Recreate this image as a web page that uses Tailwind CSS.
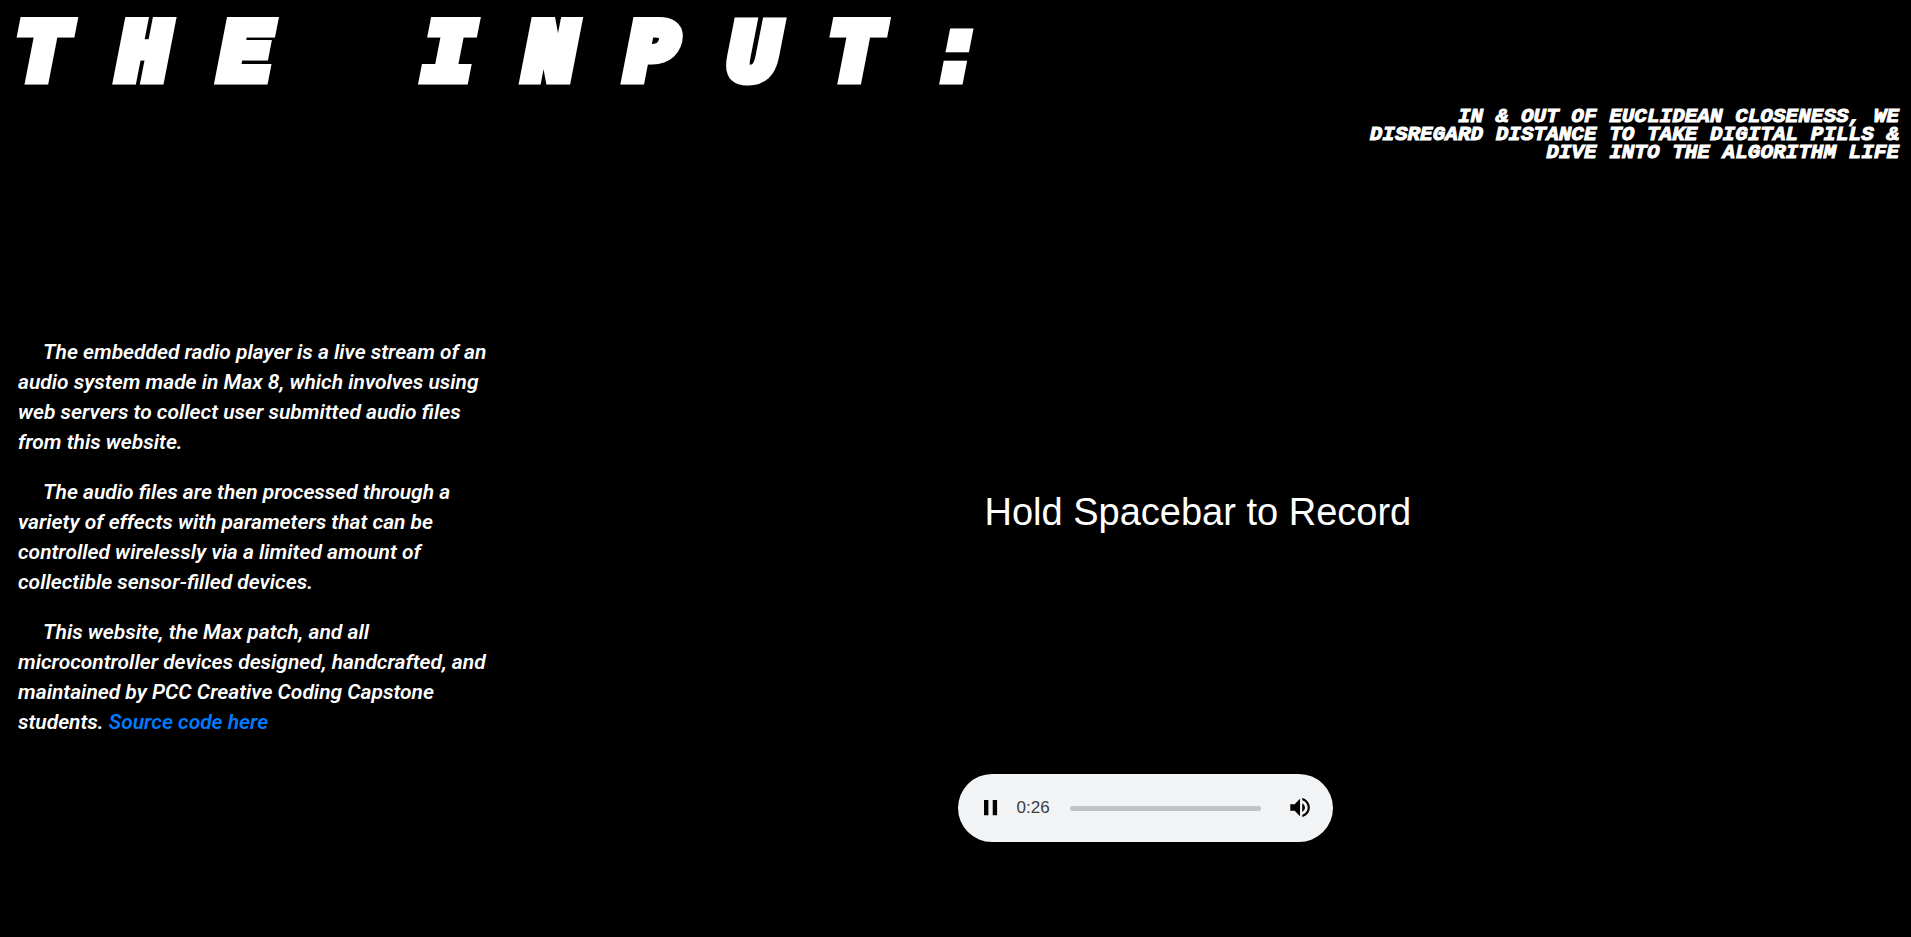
<!DOCTYPE html>
<html lang="en">
<head>
<meta charset="utf-8">
<meta name="viewport" content="width=device-width, initial-scale=1">
<title>The Input</title>
<script src="https://cdn.jsdelivr.net/npm/@tailwindcss/browser@4"></script>
</head>
<body class="min-h-screen bg-black text-white font-['Liberation_Sans',sans-serif]">
<header class="flex flex-col px-3">
  <h1 class="pl-1 pt-2 text-[86px] leading-[96px] font-bold italic whitespace-pre tracking-[50px] font-['Liberation_Mono',monospace] [-webkit-text-stroke:11px_white]">THE INPUT:</h1>
  <p class="self-end w-[540px] max-w-full pt-1 text-right text-[21px] leading-[18px] font-bold italic font-['Liberation_Mono',monospace] [-webkit-text-stroke:1px_white]">IN &amp; OUT OF EUCLIDEAN CLOSENESS, WE DISREGARD DISTANCE TO TAKE DIGITAL PILLS &amp; DIVE INTO THE ALGORITHM LIFE</p>
</header>
<main class="flex">
  <section class="w-1/2 pt-[175px] pl-[18px]">
    <div class="flex flex-col gap-5 w-[486px] max-w-full text-[21px] leading-[30px] font-semibold italic font-[Roboto,sans-serif]">
      <p class="indent-[25px]">The embedded radio player is a live stream of an audio system made in Max 8, which involves using web servers to collect user submitted audio files from this website.</p>
      <p class="indent-[25px]">The audio files are then processed through a variety of effects with parameters that can be controlled wirelessly via a limited amount of collectible sensor-filled devices.</p>
      <p class="indent-[25px]">This website, the Max patch, and all microcontroller devices designed, handcrafted, and maintained by PCC Creative Coding Capstone students. <a href="#" class="text-[#007bff]">Source code here</a></p>
    </div>
  </section>
  <section class="w-1/2 flex flex-col items-start pt-[326px] pl-[2px]">
    <p class="pl-[27px] text-[38px] leading-[48px]">Hold Spacebar to Record</p>
    <div class="mt-[238px] flex h-[68px] w-[375px] max-w-full items-center rounded-full bg-[#f1f3f4] pl-[18px] pr-[18px]">
      <button type="button" aria-label="Pause" class="size-[30px] shrink-0">
        <svg viewBox="0 0 24 24" class="size-[30px]" fill="#000"><path d="M6 19h4V5H6v14zm8-14v14h4V5h-4z" transform="translate(1.2 1.2) scale(.87)"/></svg>
      </button>
      <span class="ml-[11px] text-[17px] leading-6 text-[#3c4043]">0:26</span>
      <input type="range" min="0" max="100" value="0" aria-label="Seek" class="ml-5 h-[5px] min-w-0 flex-1 appearance-none rounded-full bg-[#c1c2c3] [&::-webkit-slider-thumb]:appearance-none [&::-webkit-slider-thumb]:size-0">
      <button type="button" aria-label="Mute" class="ml-6 size-[30px] shrink-0">
        <svg viewBox="0 0 24 24" class="size-[30px]" fill="#000"><path d="M3 9v6h4l5 5V4L7 9H3zm13.5 3c0-1.77-1.02-3.29-2.5-4.03v8.05c1.48-.73 2.5-2.25 2.5-4.02zM14 3.23v2.06c2.89.86 5 3.54 5 6.71s-2.11 5.85-5 6.71v2.06c4.01-.91 7-4.49 7-8.77s-2.99-7.86-7-8.77z" transform="translate(1.6 1.2) scale(.87)"/></svg>
      </button>
    </div>
  </section>
</main>
</body>
</html>
